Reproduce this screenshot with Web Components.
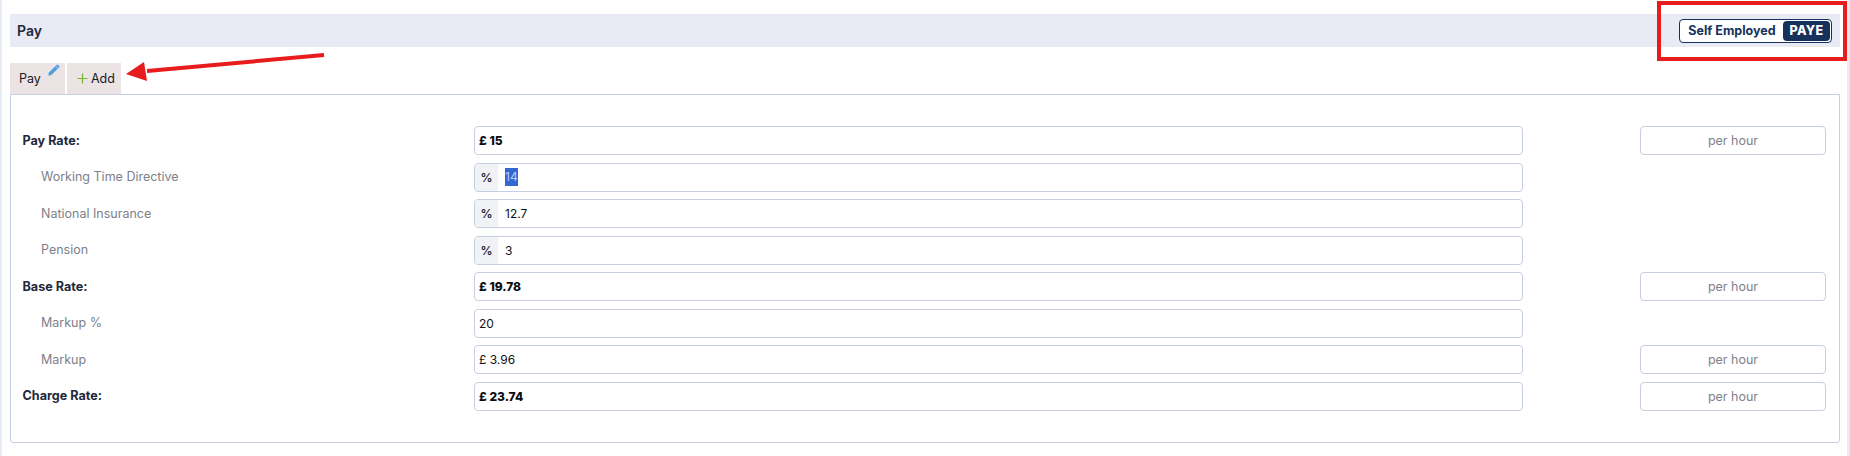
<!DOCTYPE html>
<html lang="en">
<head>
<meta charset="utf-8">
<title>Pay</title>
<style>
html,body{margin:0;padding:0;background:#fff;}
body{width:1850px;height:456px;overflow:hidden;font-family:Inter,"Liberation Sans",sans-serif;}
</style>
</head>
<body>
<pay-app>
  <section-header title-text="Pay"><mode-toggle slot="actions" off-label="Self Employed" on-label="PAYE"></mode-toggle></section-header>
  <tab-bar>
    <tab-item label="Pay" icon="pencil"></tab-item>
    <tab-item label="Add" icon="plus"></tab-item>
  </tab-bar>
  <rate-panel>
    <rate-row kind="main" label="Pay Rate:" value="£ 15" unit="per hour"></rate-row>
    <rate-row kind="sub" label="Working Time Directive" prefix="%" value="14" selected></rate-row>
    <rate-row kind="sub" label="National Insurance" prefix="%" value="12.7"></rate-row>
    <rate-row kind="sub" label="Pension" prefix="%" value="3"></rate-row>
    <rate-row kind="main" label="Base Rate:" value="£ 19.78" unit="per hour"></rate-row>
    <rate-row kind="sub" label="Markup %" value="20"></rate-row>
    <rate-row kind="sub" label="Markup" value="£ 3.96" unit="per hour"></rate-row>
    <rate-row kind="main" label="Charge Rate:" value="£ 23.74" unit="per hour"></rate-row>
  </rate-panel>
  <call-outs></call-outs>
</pay-app>
<script>
function el(name, html){
  customElements.define(name, class extends HTMLElement{
    constructor(){super();this.attachShadow({mode:'open'});}
    connectedCallback(){
      const a=n=>this.getAttribute(n)||'';
      this.shadowRoot.innerHTML=html(a,this);
    }
  });
}
el('pay-app',()=>`<style>
:host{display:grid;grid-template-columns:2px 1fr 3px;width:1850px;height:456px;position:relative;}
.strip{background:#e8ebf3;}
main{padding:14px 7px 0 8px;display:flex;flex-direction:column;min-width:0;}
</style><div class="strip"></div><main><slot></slot></main><div class="strip"></div>`);
el('section-header',a=>`<style>
:host{display:flex;align-items:center;justify-content:space-between;height:33px;background:#e8ebf3;padding:0 8px 0 7px;color:#23293a;font-size:14px;font-weight:600;}
</style><span>${a('title-text')}</span><slot name="actions"></slot>`);
el('mode-toggle',a=>`<style>
:host{display:flex;align-items:center;box-sizing:border-box;width:153px;height:24px;border:1px solid #16325c;border-radius:4px;background:#fff;padding:1px;font-size:12.5px;font-weight:700;color:#16325c;}
.off{flex:1;text-align:center;white-space:nowrap;}
.on{width:47px;height:20px;line-height:20px;text-align:center;background:#16325c;color:#fff;border-radius:4px;font-weight:800;letter-spacing:.3px;}
</style><span class="off">${a('off-label')}</span><span class="on">${a('on-label')}</span>`);
el('tab-bar',()=>`<style>
:host{display:flex;gap:2px;margin-top:16px;height:31px;}
</style><slot></slot>`);
const icons={
 pencil:`<svg class="pencil" width="12" height="12" viewBox="0 0 12 12"><path d="M0.3 11.7 L0.9 8.6 L8.6 0.9 Q9.4 0.2 10.2 0.9 L11.1 1.8 Q11.8 2.6 11.1 3.4 L3.4 11.1 Z" fill="#4d9fdf"/><path d="M7.6 2 L10 4.4" stroke="#d6e9f7" stroke-width=".7"/></svg>`,
 plus:`<svg class="plus" width="11" height="11" viewBox="0 0 11 11"><path d="M5.5 0.5V10.5M0.5 5.5H10.5" stroke="#79b52e" stroke-width="1.2" fill="none"/></svg>`
};
el('tab-item',a=>`<style>
:host{display:flex;position:relative;align-items:center;box-sizing:border-box;background:#ebe3e4;color:#171b28;font-size:12.5px;padding-bottom:1px;}
:host([icon=pencil]){width:55px;padding-left:9px;}
:host([icon=plus]){width:54px;padding-left:10px;gap:3px;}
.pencil{position:absolute;left:38px;top:1px;}
</style>${a('icon')==='plus'?icons.plus:''}<span>${a('label')}</span>${a('icon')==='pencil'?icons.pencil:''}`);
el('rate-panel',()=>`<style>
:host{display:flex;flex-direction:column;gap:7.57px;box-sizing:border-box;height:349px;border:1px solid #c6cee2;border-radius:0 0 3px 3px;padding:31px 13px 0 11.5px;}
</style><slot></slot>`);
el('rate-row',(a,h)=>{
 const pre=a('prefix')?`<span class="pre">${a('prefix')}</span>`:'';
 const val=h.hasAttribute('selected')?`<span class="sel">${a('value')}</span>`:`<span>${a('value')}</span>`;
 const unit=a('unit')?`<div class="unit">${a('unit')}</div>`:'';
 return `<style>
:host{display:grid;grid-template-columns:451.5px 1049px 117px 186px;height:29px;align-items:center;font-size:12px;color:#0f1115;}
.label{color:#7e8089;padding-left:18.5px;font-size:12.5px;padding-bottom:1px;}
:host([kind=main]) .label{color:#23293a;font-weight:700;padding-left:0;font-size:12.6px;}
.box{box-sizing:border-box;height:29px;border:1px solid #c6cee2;border-radius:4px;display:flex;align-items:center;padding-left:4px;overflow:hidden;background:#fff;}
:host([kind=main]) .box{font-weight:800;color:#0a0c10;}
:host([prefix]) .box{padding-left:0;}
.pre{width:23px;align-self:stretch;display:flex;align-items:center;justify-content:center;background:#f1f2f5;margin-right:7px;font-weight:600;color:#23293a;}
.sel{background:#3367d1;color:#b9cdf3;line-height:18px;padding:0;}
.unit{grid-column:4;box-sizing:border-box;height:29px;border:1px solid #c6cee2;border-radius:4px;display:flex;align-items:center;justify-content:center;color:#7f828b;font-size:12.5px;}
</style><div class="label">${a('label')}</div><div class="box">${pre}${val}</div>${unit}`;
});
el('call-outs',()=>`<style>
:host{position:absolute;inset:0;pointer-events:none;display:block;}
.box{position:absolute;left:1657px;top:1px;width:190px;height:60px;box-sizing:border-box;border:4px solid #e81c1c;}
svg{position:absolute;left:120px;top:50px;}
</style><div class="box"></div>
<svg width="210" height="36" viewBox="120 50 210 36"><path d="M324 55 L147 71" stroke="#e81c1c" stroke-width="4" fill="none"/><path d="M126 74 L144 62 L147 81 Z" fill="#e81c1c"/></svg>`);
</script>
</body>
</html>
